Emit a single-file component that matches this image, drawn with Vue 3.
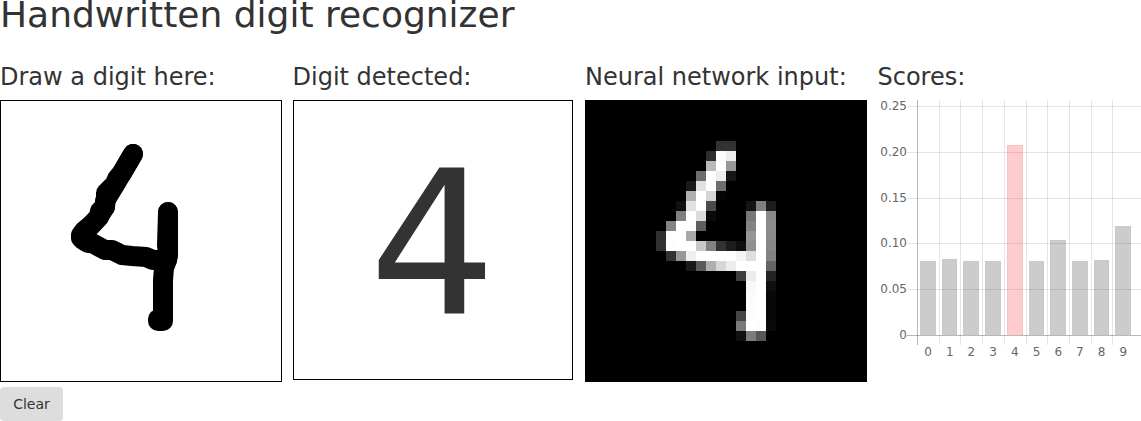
<script setup>
const scores = [
  { top: 261, x: 920, w: 16 },
  { top: 259, x: 942, w: 15 },
  { top: 261, x: 963, w: 16 },
  { top: 261, x: 985, w: 16 },
  { top: 145, x: 1007, w: 16, best: true },
  { top: 261, x: 1029, w: 15 },
  { top: 240, x: 1050, w: 16 },
  { top: 261, x: 1072, w: 16 },
  { top: 260, x: 1094, w: 15 },
  { top: 226, x: 1115, w: 16 },
]
const columns = [939, 960, 982, 1004, 1026, 1047, 1069, 1091, 1112]
const ticks = [
  { y: 106, label: '0.25' },
  { y: 152, label: '0.20' },
  { y: 198, label: '0.15' },
  { y: 243, label: '0.10' },
  { y: 289, label: '0.05' },
  { y: 335, label: '0' },
]

// Each row of the 28x28 input: row number, then [first column, grey values] runs
const rows = [
  [4, [13, [50, 50]]],
  [5, [12, [45, 252, 238]]],
  [6, [12, [185, 255, 152]]],
  [7, [11, [110, 255, 238, 22]]],
  [8, [10, [25, 225, 255, 110]]],
  [9, [10, [175, 255, 213, 5]]],
  [10, [9, [15, 225, 255, 75]], [16, [20, 128, 28]]],
  [11, [9, [128, 255, 220, 10]], [16, [120, 255, 138]]],
  [12, [8, [132, 255, 255, 95]], [16, [132, 255, 140]]],
  [13, [7, [48, 255, 255, 168]], [16, [150, 255, 138]]],
  [14, [7, [50, 253, 255, 255, 200, 130, 50, 28, 14, 145, 255, 135]]],
  [15, [8, [50, 152, 240, 255, 255, 255, 255, 245, 222, 255, 130]]],
  [16, [10, [25, 90, 175, 215, 236, 255, 255, 255, 100]]],
  [17, [15, [62, 236, 255, 36]]],
  [18, [16, [248, 255, 15]]],
  [19, [16, [251, 255, 8]]],
  [20, [16, [251, 255, 8]]],
  [21, [15, [70, 253, 255, 8]]],
  [22, [15, [122, 255, 253, 10]]],
  [23, [15, [16, 125, 88]]],
]
const cells = rows.flatMap(([y, ...runs]) =>
  runs.flatMap(([start, values]) => values.map((v, i) => ({ x: start + i, y, v })))
)
</script>

<template>
  <main class="page">
    <h1>Handwritten digit recognizer</h1>
    <div class="panels">
      <section class="panel">
        <h2>Draw a digit here:</h2>
        <svg class="drawing" width="280" height="280" viewBox="1 101 280 280">
          <polyline points="133,154 122,173 117,179 115,184 106,193 106,197 105,207 100,211 99,217 90,226 84,231 81,235 81,238 83,240 88,243 92,243 105,250 112,250 122,255 132,256 146,257 153,260 167,260 168,251 168,212" />
          <polyline points="133,154 116,183 105,201 105,207 98,218 86,231 81,237" />
          <polyline points="168,212 167,245 168,255 167,260 164,268 163,280 163,321 158,321 158,319" />
        </svg>
        <button type="button">Clear</button>
      </section>
      <section class="panel">
        <h2>Digit detected:</h2>
        <div class="detected">4</div>
      </section>
      <section class="panel">
        <h2>Neural network input:</h2>
        <svg class="network" width="280" height="280" viewBox="0 0 28 28" shape-rendering="crispEdges">
          <rect v-for="c in cells" :key="`${c.x}-${c.y}`" :x="c.x" :y="c.y" width="1" height="1" :fill="`rgb(${c.v},${c.v},${c.v})`" />
        </svg>
      </section>
      <section class="panel">
        <h2>Scores:</h2>
        <svg class="chart" width="264" height="270" viewBox="878 100 264 270">
          <g shape-rendering="crispEdges">
            <rect v-for="x in columns" :key="x" class="grid" :x="x" y="100" width="1" height="245" />
            <rect v-for="t in ticks.slice(0, 5)" :key="t.y" class="grid" x="907" :y="t.y" width="240" height="1" />
            <rect class="axis" x="917" y="100" width="1" height="245" />
            <rect class="axis" x="907" y="335" width="240" height="1" />
            <g v-for="s in scores" :key="s.x" :class="['bar', { best: s.best }]">
              <rect :x="s.x" :y="s.top" :width="s.w" :height="335 - s.top" />
              <path :d="`M${s.x + .5} 335V${s.top + .5}H${s.x + s.w - .5}V335`" />
            </g>
          </g>
          <text v-for="t in ticks" :key="t.label" x="907" :y="t.y + 4" text-anchor="end">{{ t.label }}</text>
          <text v-for="(s, i) in scores" :key="i" :x="928 + i * 21.7" y="356" text-anchor="middle">{{ i }}</text>
        </svg>
      </section>
    </div>
  </main>
</template>

<style>
body {
  background: #fff;
  overflow: hidden;
}
</style>

<style scoped>
.page {
  height: 421px;
  overflow: hidden;
  color: #333;
  font-family: "DejaVu Sans", sans-serif;
}
h1 {
  margin: -5px 0 0;
  height: 65px;
  font-size: 36px;
  font-weight: 400;
  line-height: 40px;
}
.panels {
  display: grid;
  grid-template-columns: repeat(4, 292.5px);
}
h2 {
  margin: 0;
  height: 40px;
  font-size: 24px;
  font-weight: 400;
  line-height: 35px;
  white-space: nowrap;
}
svg {
  display: block;
}
.drawing {
  border: 1px solid #000;
}
.drawing polyline {
  fill: none;
  stroke: #000;
  stroke-width: 20;
  stroke-linecap: round;
  stroke-linejoin: round;
}
.detected {
  box-sizing: border-box;
  width: 280px;
  height: 280px;
  border: 1px solid #000;
  font-size: 200px;
  line-height: 286px;
  text-align: center;
}
.network {
  border: 1px solid #000;
  background: #000;
}
button {
  display: block;
  width: 63px;
  height: 34px;
  margin-top: 5px;
  padding: 0;
  border: 0;
  border-radius: 4px;
  background: #ddd;
  color: #333;
  font: 14px/34px "DejaVu Sans", sans-serif;
}
.grid {
  fill: rgba(0, 0, 0, 0.1);
}
.axis {
  fill: rgba(0, 0, 0, 0.28);
}
.bar rect {
  fill: rgba(0, 0, 0, 0.2);
}
.bar path {
  fill: none;
  stroke: rgba(0, 0, 0, 0.012);
}
.bar.best rect {
  fill: rgba(255, 0, 0, 0.2);
}
.bar.best path {
  stroke: rgba(120, 160, 120, 0.12);
}
.chart text {
  fill: #666;
  font-size: 12px;
}
</style>
